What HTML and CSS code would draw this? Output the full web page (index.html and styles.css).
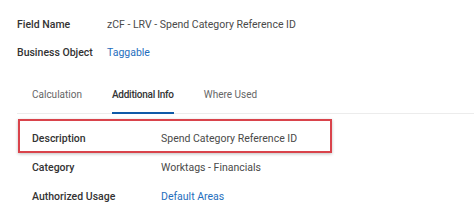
FILE: index.html
```html
<!DOCTYPE html>
<html>
    <head>
        <meta charset="utf-8">
        <title>Field Details</title>
        <link rel="stylesheet" href="styles.css">
    </head>
    <body>
        <div class="header">
            <div class="row">
                <span class="label">Field Name</span>
                <span class="value">zCF - LRV - Spend Category Reference ID</span>
            </div>
            <div class="row">
                <span class="label">Business Object</span>
                <a class="link" href="">Taggable</a>
            </div>
        </div>
        <ul class="tabs">
            <li><span>Calculation</span></li>
            <li class="active"><span>Additional Info</span></li>
            <li><span>Where Used</span></li>
        </ul>
        <div class="details">
            <div class="item highlight">
                <span class="label">Description</span>
                <span class="value">Spend Category Reference ID</span>
            </div>
            <div class="item">
                <span class="label">Category</span>
                <span class="value">Worktags - Financials</span>
            </div>
            <div class="item">
                <span class="label">Authorized Usage</span>
                <a class="link" href="">Default Areas</a>
            </div>
        </div>
    </body>
</html>
```

FILE: styles.css
```css
*{
    margin: 0;
    padding: 0;
    list-style: none;
    box-sizing: border-box;
}
body{
    background: #fff;
    font-family: Roboto, "Liberation Sans", sans-serif;
    font-size: 10.5px;
    color: #444;
}
a{
    text-decoration: none;
}
.label{
    color: #333;
    font-weight: 500;
}
.value{
    color: #4a4a4a;
}
.link{
    color: #1f6ebd;
}

/* 顶部 字段名 / 业务对象 */
.header{
    padding: 11px 0 0 17px;
}
.header .row{
    display: flex;
    height: 28px;
    line-height: 28px;
}
.header .label{
    width: 90px;
}

/* 标签页 */
.tabs{
    display: flex;
    margin-left: 17px;
    border-bottom: 1px solid #ececec;
    font-size: 10px;
}
.tabs li{
    margin: 0 15px;
    color: #666;
}
.tabs li span{
    display: block;
    padding-top: 18px;
    line-height: 20px;
    padding-bottom: 7px;
    border-bottom: 2px solid transparent;
    margin-bottom: -1px;
}
.tabs li.active{
    color: #333;
    font-weight: 500;
    letter-spacing: -0.25px;
}
.tabs li.active span{
    border-bottom-color: #0f5aa8;
}

/* 详情 */
.details{
    margin: 5px 0 0 18px;
}
.details .item{
    display: flex;
    height: 29px;
    line-height: 29px;
    padding-left: 14px;
}
.details .label{
    width: 129px;
}
.details .highlight{
    width: 314px;
    height: 34px;
    line-height: 26px;
    padding: 5px 0 0 12px;
    border: 2px solid #d9434b;
    box-shadow: 0 1px 3px rgba(0,0,0,0.25);
}
```
